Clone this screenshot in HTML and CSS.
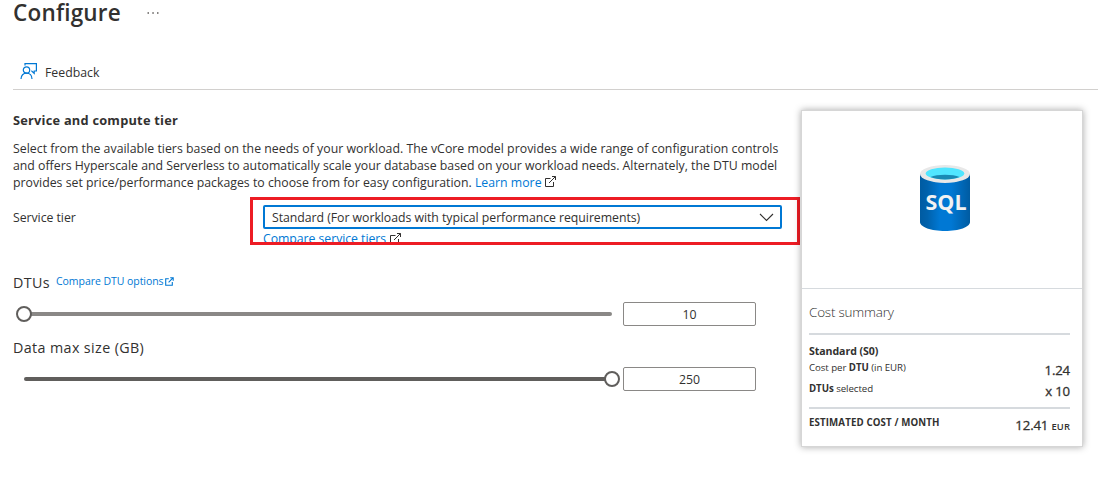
FILE: index.html
```html
<!DOCTYPE html>
<html lang="en">
<head>
<meta charset="utf-8">
<title>Configure</title>
<link rel="stylesheet" href="styles.css">
</head>
<body>
<svg class="defs" width="0" height="0">
  <symbol id="popout" viewBox="0 0 11 11">
    <path d="M5.5 2.5H.5v8h8V6M7 .5h3.500V4M10.500.5 4 7" fill="none" stroke="currentColor"/>
  </symbol>
</svg>
<header class="title-bar">
  <h1 class="title">Configure</h1>
  <svg class="more" width="12" height="2" viewBox="0 0 12 2"><path d="M.5 .2h1.500v1.500H.5zM5.300 .2h1.500v1.500H5.300zM10 .2h1.500v1.500H10z" fill="#605e5c"/></svg>
</header>
<nav class="toolbar">
  <svg class="feedback-icon" width="18" height="18" viewBox="0 0 18 18" fill="none" stroke="#0078d4" stroke-width="1.200">
    <circle cx="6.500" cy="8" r="3.200"/>
    <path d="M1 17c0-3.500 2.300-5.800 5.500-5.800S12 13.500 12 17M5 3.500V1.600h11.400V9h-2.200v2.300L11.700 9h-.5"/>
  </svg>
  <span class="feedback">Feedback</span>
</nav>
<div class="content">
  <main class="form">
    <h2 class="heading">Service and compute tier</h2>
    <p class="description">
      <span class="line l1">Select from the available tiers based on the needs of your workload. The vCore model provides a wide range of configuration controls</span>
      <span class="line l2">and offers Hyperscale and Serverless to automatically scale your database based on your workload needs. Alternately, the DTU model</span>
      <span class="line l3">provides set price/performance packages to choose from for easy configuration. <a class="link">Learn more</a> <svg class="popout" width="11" height="11"><use href="#popout"/></svg></span>
    </p>
    <div class="tier-row">
      <label class="tier-label">Service tier</label>
      <div class="highlight">
        <div class="select">
          <span class="select-text">Standard (For workloads with typical performance requirements)</span>
          <svg width="15" height="9" viewBox="0 0 15 9"><path d="M1 1l6.500 6.500L14 1" fill="none" stroke="#323130" stroke-width="1.100"/></svg>
        </div>
        <div class="compare"><a class="link compare-text">Compare service tiers</a><svg class="popout" width="11" height="11"><use href="#popout"/></svg></div>
      </div>
    </div>
    <div class="dtu-label"><span class="size-label dtus">DTUs</span><a class="link small-link">Compare DTU options</a><svg class="small-popout" width="9" height="9" viewBox="0 0 9 9"><path d="M3.800 1.700H.7v6.600h6.600V5M5.200.7h3v3M8.200.7 3.600 5.300" fill="none" stroke="#0078d4" stroke-width="1.100"/></svg></div>
    <div class="slider-row">
      <div class="slider light"><i class="thumb start"></i></div>
      <div class="number">10</div>
    </div>
    <div class="size-label data-label">Data max size (GB)</div>
    <div class="slider-row">
      <div class="slider dark"><i class="thumb end"></i></div>
      <div class="number">250</div>
    </div>
  </main>
  <aside class="card">
    <div class="hero">
      <svg class="sql" width="50" height="66" viewBox="0 0 50 66">
        <defs><linearGradient id="body"><stop offset="0" stop-color="#005ba1"/><stop offset=".15" stop-color="#0062ad"/><stop offset=".4" stop-color="#0078d4"/><stop offset=".62" stop-color="#0078d4"/><stop offset="1" stop-color="#005ba1"/></linearGradient></defs>
        <path d="M0 9v48c0 5 11.200 9 25 9s25-4 25-9V9z" fill="url(#body)"/>
        <ellipse cx="25" cy="9" rx="25" ry="9" fill="#e8e8e8"/>
        <ellipse cx="25" cy="8.500" rx="19.300" ry="5.900" fill="#50e6ff"/>
        <path d="M10.500 12C14 10.500 19 9.800 25 9.800s11 .7 14.500 2.200c-3.500 1.600-8.500 2.400-14.500 2.400S14 13.600 10.500 12z" fill="#198ab3"/>
        <text class="sql-text" x="5.500" y="45" textLength="41" lengthAdjust="spacingAndGlyphs">SQL</text>
      </svg>
    </div>
    <div class="summary">
      <div class="summary-title"><span>Cost summary</span></div>
      <div class="costs">
        <div class="plan"><span>Standard (S0)</span></div>
        <div class="cost-row first"><span class="key k1">Cost per <b>DTU</b> (in EUR)</span><span class="value">1.24</span></div>
        <div class="cost-row second"><span class="key k2"><b>DTUs</b> selected</span><span class="value">x 10</span></div>
      </div>
      <div class="cost-row total"><span class="key k3"><b>ESTIMATED COST / MONTH</b></span><span class="value">12.41 <small class="currency">EUR</small></span></div>
    </div>
  </aside>
</div>
</body>
</html>
```
FILE: styles.css
```css
* { box-sizing: border-box; }
body {
  margin: 0;
  width: 1098px;
  height: 489px;
  overflow: hidden;
  background: #fff;
  color: #323130;
  font: 12.3px/17px "Open Sans", "Noto Sans", sans-serif;
  white-space: nowrap;
}
.defs { position: absolute; }
svg { flex: none; }
.title-bar { display: flex; height: 52px; padding-left: 13px; }
.title { margin: 0; width: 134px; font-size: 22.5px; line-height: 26px; font-weight: 600; letter-spacing: .2px; }
.more { margin-top: 12px; }
.toolbar { display: flex; margin-left: 13px; height: 38px; border-bottom: 1px solid #d2d0ce; padding: 10px 0 0 7px; }
.feedback { margin: 2px 0 0 7px; }
.content { display: flex; padding-left: 13px; }
.form { width: 788px; padding-top: 22px; }
.heading { margin: 0; font-size: 12.8px; line-height: 17px; font-weight: 700; letter-spacing: .23px; }
.description { margin: 11px 0 0; }
.line { display: block; height: 17px; }
.l1 { letter-spacing: .021px; }
.l2 { letter-spacing: -.004px; }
.link { color: #0078d4; }
.popout { color: #323130; }
.tier-row { display: flex; margin-top: 6px; }
.tier-label { width: 237px; padding-top: 12px; letter-spacing: -.05px; }
.highlight { width: 550px; height: 48px; border: 3px solid #ed1c24; padding: 5px 0 0 10px; overflow: hidden; }
.select { width: 519px; height: 24px; border: 2px solid #0078d4; border-radius: 2px; display: flex; align-items: center; justify-content: space-between; padding: 0 6px 0 7px; }
.select-text { letter-spacing: -.045px; }
.compare { display: flex; align-items: center; gap: 4px; height: 19px; }
.compare-text { letter-spacing: -.06px; }
.dtu-label { display: flex; align-items: center; height: 22px; margin-top: 26px; }
.size-label { font-size: 14.3px; line-height: 20px; }
.dtus { width: 43px; padding-top: 2px; letter-spacing: .4px; }
.small-link { font-size: 10.5px; height: 18px; letter-spacing: -.05px; }
.small-popout { margin: -2px 0 0 1px; }
.slider-row { display: flex; align-items: center; height: 24px; margin-top: 9px; gap: 11px; padding-left: 11px; }
.slider { display: flex; align-items: center; width: 588px; height: 4px; border-radius: 2px; }
.light { background: #8a8886; }
.dark { background: #605e5c; }
.thumb { width: 16px; height: 16px; border: 2px solid #605e5c; border-radius: 50%; background: #fff; flex: none; }
.start { margin-left: -8px; }
.end { margin-left: 580px; }
.number { width: 133px; height: 24px; border: 1px solid #8a8886; border-radius: 2px; text-align: center; line-height: 23px; }
.data-label { margin-top: 12px; height: 20px; letter-spacing: .38px; }
.card { width: 282px; height: 337px; margin-top: 20px; border: 1px solid #d6d6d6; box-shadow: 0 0 7px rgba(0,0,0,.35); }
.hero { height: 178px; border-bottom: 1px solid #d6dade; padding: 54px 0 0 118px; }
.sql { display: block; }
.sql-text { font: 700 22px "Open Sans", sans-serif; fill: #f2f2f2; }
.summary { padding: 0 12px 0 7px; }
.summary-title { height: 46px; border-bottom: 2px solid #d6dade; padding-top: 14px; font-size: 13.5px; font-weight: 300; line-height: 19px; letter-spacing: -.22px; }
.costs { height: 74px; border-bottom: 2px solid #d6dade; padding-top: 7px; }
.plan { font-size: 10.6px; font-weight: 700; line-height: 18px; letter-spacing: -.08px; height: 19px; }
.cost-row { display: flex; justify-content: space-between; }
.key { font-size: 9.7px; line-height: 14px; }
.key b { font-weight: 700; }
.k1, .k2 { letter-spacing: -.06px; }
.value { font-size: 13.2px; line-height: 18px; font-weight: 400; letter-spacing: -.15px; -webkit-text-stroke: .3px #323130; }
.first, .second { height: 21px; }
.total { padding-top: 7px; }
.k3 { letter-spacing: .13px; }
.currency { font-size: 9.4px; font-weight: 600; letter-spacing: .1px; -webkit-text-stroke: 0; }
```
